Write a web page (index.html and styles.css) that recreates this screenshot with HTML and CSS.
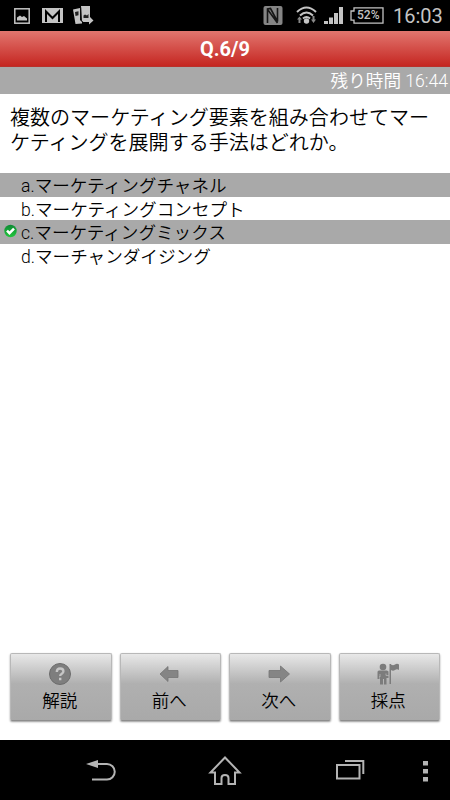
FILE: index.html
```html
<!DOCTYPE html>
<html lang="ja">
<head>
    <meta charset="UTF-8">
    <meta name="viewport" content="width=device-width, initial-scale=1.0">
    <title>Q.6/9</title>
    <link rel="stylesheet" href="styles.css">
</head>
<body>
    <div class="screen">
        <div class="status-bar">
            <svg class="notifications" width="100" height="31" viewBox="0 0 100 31">
                <rect x="14.8" y="8.8" width="14.4" height="14.4" fill="none" stroke="#c4c4c4" stroke-width="1.5"/>
                <path d="M17 20.500v-3l3-2 2 1.500 2-1 3 2.500v2z" fill="#c4c4c4"/>
                <rect x="42" y="8" width="21" height="15" fill="#c4c4c4"/>
                <path d="M46 22V11.500l6.500 6.500 6.500-6.500V22" fill="none" stroke="#000" stroke-width="2"/>
                <path d="M73 9.500l7-1.500v12l2 2v1.500l-6.500.5zM81 6h9v11l3.500 3.500-4.500 4v-2.500H82z" fill="#c4c4c4"/>
                <path d="M75 12l3.500-.7v4l-3 .7zM83.500 18v-2.500l1.500-1 2 1 1.500-1.500v4z" fill="#222"/>
                <path d="M80.700 7.500v12.500l2.500 2" fill="none" stroke="#111" stroke-width=".9"/>
            </svg>
            <svg class="signals" width="82" height="31" viewBox="0 0 82 31">
                <rect x="0.500" y="6" width="19" height="19" rx="2" fill="#858585"/>
                <path d="M4.500 23V9l3-.5 7 13V8M5 10l9.500 13" fill="none" stroke="#161616" stroke-width="1.600"/>
                <path d="M34 12q9.500-9 19 0M37 15.500q6.500-6 13 0M40 18.500q3.500-3 7 0" fill="none" stroke="#c4c4c4" stroke-width="2"/>
                <circle cx="43.500" cy="21" r="2.700" fill="#c4c4c4"/>
                <path d="M34 19.500l2.500-3 2.500 3h-1.500V23h-2v-3.500zM48 19.500h1.500V16h2v3.500H53L50.500 23z" fill="#888"/>
                <path d="M61 21h4v3h-4zM66 17.500h4V24h-4zM71 13h4v11h-4zM76 7h4v17h-4z" fill="#c4c4c4"/>
            </svg>
            <div class="battery">
                <svg width="34" height="17" viewBox="0 0 34 17">
                    <path d="M4 .8h29v15.400H4v-3H1V4h3z" fill="none" stroke="#c4c4c4" stroke-width="1.300"/>
                </svg>
                <span class="battery-text">52%</span>
            </div>
            <span class="clock">16:03</span>
        </div>

        <div class="title">Q.6/9</div>
        <div class="time-left">残り時間 16:44</div>

        <div class="content">
            <div class="question">複数のマーケティング要素を組み合わせてマーケティングを展開する手法はどれか。</div>
            <ul class="answers">
                <li class="answer gray"><span class="mark"></span>a.マーケティングチャネル</li>
                <li class="answer"><span class="mark"></span>b.マーケティングコンセプト</li>
                <li class="answer gray">
                    <span class="mark">
                        <svg width="14" height="14" viewBox="0 0 14 14">
                            <defs>
                                <linearGradient id="green" x1="0" y1="0" x2="0" y2="1">
                                    <stop offset="0" stop-color="#0d8a35"/>
                                    <stop offset="1" stop-color="#22c63c"/>
                                </linearGradient>
                            </defs>
                            <circle cx="6.500" cy="7" r="6.200" fill="url(#green)"/>
                            <path d="M3 6.700l2.500 2.500 4.500-4.500" fill="none" stroke="#fff" stroke-width="2.500"/>
                        </svg>
                    </span>c.マーケティングミックス
                </li>
                <li class="answer"><span class="mark"></span>d.マーチャンダイジング</li>
            </ul>
        </div>

        <div class="buttons">
            <button class="btn">
                <svg width="24" height="24" viewBox="0 0 24 24">
                    <circle cx="12" cy="12" r="10.500" fill="#7e7e7e" stroke="#6c6c6c"/>
                    <path d="M8.800 10q0-3.500 3.300-3.500t3.300 2.800q0 1.700-1.700 2.500-1.500.8-1.500 2.200M12.200 15.700v2.500" fill="none" stroke="#c6c6c6" stroke-width="2.400"/>
                </svg>
                解説
            </button>
            <button class="btn">
                <svg width="24" height="24" viewBox="0 0 24 24">
                    <path d="M3 12l8-7.500v4h10v7H11v4z" fill="#858585" stroke="#757575" stroke-width=".8"/>
                </svg>
                前へ
            </button>
            <button class="btn">
                <svg width="24" height="24" viewBox="0 0 24 24">
                    <path d="M22.500 12l-9 8v-4.500H2v-7h11.500V4z" fill="#858585" stroke="#757575" stroke-width=".8"/>
                </svg>
                次へ
            </button>
            <button class="btn">
                <svg width="24" height="24" viewBox="0 0 24 24">
                    <g fill="#7c7c7c">
                        <circle cx="7" cy="5" r="3.300"/>
                        <path d="M1.500 10q0-1.500 1.500-1.500h8l1.500 1V16h-2v6.500H8V17H7v5.500H4V14h-.5v3h-2zM13.500 2H15v20h-1.500zM15 2.500q2 1.500 4 0t4 0V8q-2-1.500-4 0t-4 0z"/>
                    </g>
                    <path d="M4 12v3M10 11.500v2h3" fill="none" stroke="#b5b5b5" stroke-width=".8"/>
                </svg>
                採点
            </button>
        </div>

        <div class="nav-bar">
            <svg width="450" height="60" viewBox="0 0 450 60">
                <g fill="none" stroke="#b4b4b4" stroke-width="2">
                    <path d="M96 24h11a7.700 7.700 0 0 1 0 15.500H92"/>
                    <path d="M225 17.500l14.500 15H235v11.500h-6.500v-6q0-3-3.500-3t-3.500 3v6H215V32.500h-4.500z"/>
                    <rect x="337" y="25" width="22.500" height="13.500"/>
                    <path d="M345 21h18.300v13"/>
                </g>
                <path d="M86 24l12-4v8zM423 21h5v4.500h-5zM423 29h5v4.500h-5zM423 37h5v4.500h-5z" fill="#b4b4b4"/>
            </svg>
        </div>
    </div>
</body>
</html>
```

FILE: styles.css
```css
html, body {
    margin: 0;
    padding: 0;
    height: 100%;
}
body {
    font-family: Roboto, "Noto Sans CJK JP", sans-serif;
    background: #fff;
    color: #000;
}
.screen {
    display: flex;
    flex-direction: column;
    width: 450px;
    height: 800px;
    overflow: hidden;
}
svg {
    display: block;
}
.status-bar {
    display: flex;
    align-items: center;
    height: 31px;
    background: #000;
    color: #c4c4c4;
}
.signals {
    margin-left: 163px;
}
.battery {
    position: relative;
    margin-left: 5px;
}
.battery-text {
    position: absolute;
    top: 1px;
    left: 7px;
    font-size: 12px;
    line-height: 15px;
    font-weight: 500;
}
.clock {
    margin-left: 9px;
    padding-top: 2px;
    font-size: 20px;
    line-height: 29px;
}
.title {
    height: 36px;
    box-sizing: border-box;
    background: linear-gradient(#e2766f, #c52621);
    border-bottom: 1px solid #b9302b;
    color: #fff;
    font-size: 20px;
    font-weight: bold;
    line-height: 37px;
    text-align: center;
}
.time-left {
    height: 27px;
    padding-right: 2px;
    background: #a9a9a9;
    color: #fff;
    font-size: 17.6px;
    font-weight: 350;
    line-height: 28px;
    text-align: right;
}
.content {
    flex: 1;
    font-weight: 350;
}
.question {
    height: 67px;
    padding: 12px 9px 0 10px;
    font-size: 20.05px;
    line-height: 25px;
    word-break: break-all;
}
.answers {
    margin: 0;
    padding: 0;
    list-style: none;
}
.answer {
    display: flex;
    height: 23.7px;
    font-size: 17.6px;
    line-height: 26px;
}
.answer.gray {
    background: #a9a9a9;
}
.mark {
    width: 17px;
    padding: 4px 0 0 4px;
}
.buttons {
    display: flex;
    gap: 8px;
    padding: 0 10px 19px;
}
.btn {
    display: flex;
    flex: 1;
    flex-direction: column;
    align-items: center;
    height: 68px;
    padding: 8px 2px 0 0;
    border: 1px solid #b8b8b8;
    border-bottom-color: #8d8d8d;
    border-radius: 2px;
    background: linear-gradient(#e8e8e8, #b0b0b0 45%, #a9a9a9);
    box-shadow: 0 1px 2px rgba(0, 0, 0, 0.4);
    color: #000;
    font-family: inherit;
    font-size: 17.5px;
    font-weight: 350;
    line-height: 31px;
}
.nav-bar {
    height: 60px;
    background: #000;
}
```
